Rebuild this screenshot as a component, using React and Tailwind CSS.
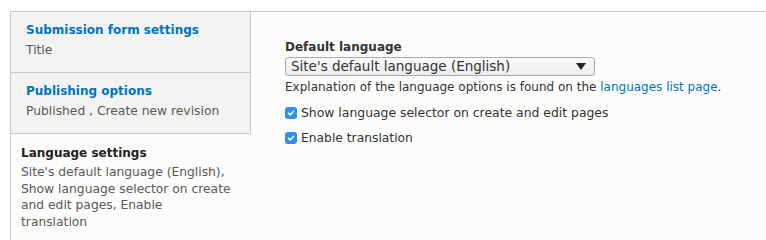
export default function App() {
  const font = { fontFamily: '"DejaVu Sans", sans-serif' };
  const Check = () => (
    <span className="flex h-[12px] w-[12px] shrink-0 items-center justify-center rounded-[3px] bg-[#2f8ff5]">
      <svg width="8" height="8" viewBox="0 0 8 8"><path d="M1.5 4.2l1.8 1.8 3.2-3.8" stroke="white" strokeWidth="1.5" fill="none" strokeLinecap="round" strokeLinejoin="round" /></svg>
    </span>
  );
  return (
    <div className="h-[240px] w-[766px] overflow-hidden bg-white pl-[10px] pt-[11px]" style={font}>
      <div className="flex h-[260px] border-l border-t border-[#c8c8c8] bg-[#fcfcfa]">
        <div className="w-[240px] shrink-0 text-[12.3px]">
          <div className="border-b border-r border-[#c8c8c8] bg-[#f2f2f0] px-[15px] pb-[12px] pt-[9px] leading-[19px]">
            <div className="text-[12px] font-bold text-[#0074bd]">Submission form settings</div>
            <div className="mt-[1px] text-[#595959]">Title</div>
          </div>
          <div className="border-b border-r border-[#c8c8c8] bg-[#f2f2f0] px-[15px] pb-[12px] pt-[9px] leading-[19px]">
            <div className="text-[12px] font-bold text-[#0074bd]">Publishing options</div>
            <div className="mt-[1px] text-[#595959]">Published , Create new revision</div>
          </div>
          <div className="pl-[10px] pr-[10px] pt-[10px] leading-[16.5px]">
            <div className="text-[12px] font-bold leading-[19px] text-[#222]">Language settings</div>
            <div className="mt-[1px] text-[#595959]">
              Site's default language (English), Show language selector on create and edit pages, Enable
              <br />
              translation
            </div>
          </div>
        </div>
        <div className="flex-1 pl-[34px] pt-[27px] text-[12.3px] text-[#333]">
          <div className="text-[12px] font-bold leading-[17px] text-[#333]">Default language</div>
          <div className="mt-[1px] flex h-[19px] w-[310px] items-center justify-between rounded-[3px] border border-[#aaa] bg-gradient-to-b from-[#fafafa] to-[#ececec] pl-[5px] pr-[8px] text-[13.5px] text-[#333]">
            <span>Site's default language (English)</span>
            <svg width="10" height="7" viewBox="0 0 10 7"><path d="M0 0h10L5 7z" fill="#222" /></svg>
          </div>
          <div className="mt-[2px] text-[12px] leading-[18px] text-[#333]">
            Explanation of the language options is found on the <span className="text-[#0074bd]">languages list page</span>.
          </div>
          <div className="mt-[8px] flex items-center gap-[4px] text-[12.4px] leading-[18px]">
            <Check />
            <span>Show language selector on create and edit pages</span>
          </div>
          <div className="mt-[7px] flex items-center gap-[4px] leading-[18px]">
            <Check />
            <span>Enable translation</span>
          </div>
        </div>
      </div>
    </div>
  );
}
